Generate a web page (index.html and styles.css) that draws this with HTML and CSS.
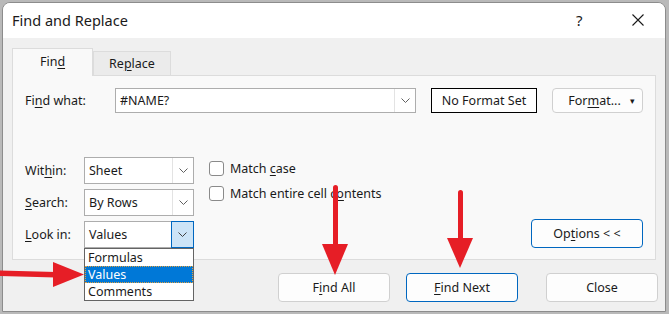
FILE: index.html
```html
<!DOCTYPE html>
<html>
  <head>
    <meta charset="utf-8" />
    <title>Find and Replace</title>
    <meta name="viewport" content="width=device-width, initial-scale=1" />
    <link rel="stylesheet" href="styles.css">
  </head>
  <body>
    <div class="window">
      <div class="titlebar">
        <span class="title">Find and Replace</span>
        <span class="help">?</span>
        <span class="close-x">
          <svg width="12" height="12" viewBox="0 0 12 12"><path d="M0.5 0.5 L11.5 11.5 M11.5 0.5 L0.5 11.5" stroke="#1a1a1a" stroke-width="1.1" fill="none"/></svg>
        </span>
      </div>
      <div class="content">
        <div class="tabs">
          <div class="tab active"><span>Fin<u>d</u></span></div>
          <div class="tab"><span>Re<u>p</u>lace</span></div>
        </div>
        <div class="panel">
          <div class="find-row">
            <span class="lbl lbl-find">Fi<u>n</u>d what:</span>
            <div class="combo combo-find">
              <span class="combo-text">#NAME?</span>
              <span class="combo-arrow">
                <svg width="9" height="5" viewBox="0 0 9 5"><path d="M0.5 0.5 L4.5 4.5 L8.5 0.5" stroke="#606060" fill="none"/></svg>
              </span>
            </div>
            <div class="format-preview">No Format Set</div>
            <div class="btn btn-format"><span>For<u>m</u>at...</span><span class="caret">&#9662;</span></div>
          </div>
          <div class="options-area">
            <div class="fields">
              <div class="field">
                <span class="lbl lbl-small">Wit<u>h</u>in:</span>
                <div class="combo">
                  <span class="combo-text">Sheet</span>
                  <span class="combo-arrow">
                    <svg width="9" height="5" viewBox="0 0 9 5"><path d="M0.5 0.5 L4.5 4.5 L8.5 0.5" stroke="#606060" fill="none"/></svg>
                  </span>
                </div>
              </div>
              <div class="field">
                <span class="lbl lbl-small"><u>S</u>earch:</span>
                <div class="combo">
                  <span class="combo-text">By Rows</span>
                  <span class="combo-arrow">
                    <svg width="9" height="5" viewBox="0 0 9 5"><path d="M0.5 0.5 L4.5 4.5 L8.5 0.5" stroke="#606060" fill="none"/></svg>
                  </span>
                </div>
              </div>
              <div class="field">
                <span class="lbl lbl-small"><u>L</u>ook in:</span>
                <div class="combo open">
                  <span class="combo-text">Values</span>
                  <span class="combo-arrow">
                    <svg width="9" height="5" viewBox="0 0 9 5"><path d="M0.5 0.5 L4.5 4.5 L8.5 0.5" stroke="#404040" fill="none"/></svg>
                  </span>
                  <div class="droplist">
                    <div class="drop-item">Formulas</div>
                    <div class="drop-item selected">Values</div>
                    <div class="drop-item">Comments</div>
                  </div>
                </div>
              </div>
            </div>
            <div class="checks">
              <div class="check"><span class="box"></span><span>Match <u>c</u>ase</span></div>
              <div class="check"><span class="box"></span><span>Match entire cell c<u>o</u>ntents</span></div>
            </div>
            <div class="btn btn-focus btn-options"><span>Op<u>t</u>ions &lt; &lt;</span></div>
          </div>
        </div>
        <div class="actions">
          <div class="btn btn-action"><span>F<u>i</u>nd All</span></div>
          <div class="btn btn-action btn-focus btn-next"><span><u>F</u>ind Next</span></div>
          <div class="btn btn-action btn-close">Close</div>
        </div>
      </div>
    </div>

    <!-- red annotation arrows -->
    <svg class="arrows" width="669" height="314" viewBox="0 0 669 314">
      <polygon points="0,270.5 56,272 56,277.5 0,276" fill="#e61e26"/>
      <polygon points="53,262 84,274.5 53,287" fill="#e61e26"/>
      <rect x="333" y="185" width="5" height="62" rx="2.5" fill="#e61e26"/>
      <polygon points="322,244 348,244 335,275" fill="#e61e26"/>
      <rect x="458" y="190" width="5" height="52" rx="2.5" fill="#e61e26"/>
      <polygon points="447,238 473,238 460,268" fill="#e61e26"/>
    </svg>
  </body>
</html>
```

FILE: styles.css
```css
body {
  margin: 0;
  padding: 2px 3px 2px 2px;
  background-color: #b9b9b9;
  font-family: "Noto Sans", "Open Sans", sans-serif;
  font-size: 12.5px;
  color: #1a1a1a;
  position: relative;
  width: 669px;
  height: 314px;
  box-sizing: border-box;
  overflow: hidden;
}
u {
  text-decoration-thickness: 1px;
  text-underline-offset: 2px;
}
.window {
  width: 664px;
  height: 310px;
  box-sizing: border-box;
  border: 1px solid #8c8c8c;
  border-radius: 8px 8px 0 0;
  background: #f0f0f0;
  display: flex;
  flex-direction: column;
  overflow: hidden;
}
.titlebar {
  height: 35px;
  background: #ffffff;
  display: flex;
  align-items: center;
  padding-left: 9px;
  flex-shrink: 0;
}
.title {
  font-size: 14.5px;
  flex: 1;
  padding-bottom: 2px;
}
.help {
  font-size: 15px;
  width: 12px;
  margin-right: 44px;
  padding-bottom: 2px;
}
.close-x {
  display: flex;
  margin-right: 21px;
  margin-bottom: 2px;
}
.content {
  flex: 1;
  padding: 10px 8px 0 9px;
  display: flex;
  flex-direction: column;
}
.tabs {
  display: flex;
  align-items: flex-end;
  height: 27px;
}
.tab {
  box-sizing: border-box;
  height: 24px;
  width: 78px;
  border: 1px solid #dcdcdc;
  border-bottom: none;
  background: #ebebeb;
  display: flex;
  justify-content: center;
  align-items: center;
  padding-bottom: 1px;
}
.tab.active {
  height: 28px;
  width: 81px;
  background: #f9f9f9;
  margin-bottom: -1px;
  position: relative;
  z-index: 1;
  padding-bottom: 3px;
}
.panel {
  height: 185px;
  box-sizing: border-box;
  border: 1px solid #dcdcdc;
  background: #f9f9f9;
  padding: 12px 12px 11px 12px;
  width: 644px;
  display: flex;
  flex-direction: column;
}
.find-row {
  display: flex;
  align-items: center;
  height: 25px;
}
.lbl-find {
  width: 90px;
}
.lbl-small {
  width: 59px;
}
.combo {
  box-sizing: border-box;
  height: 27px;
  width: 110px;
  border: 1px solid #adadad;
  background: #ffffff;
  display: flex;
  align-items: stretch;
  position: relative;
}
.combo-find {
  width: 301px;
  height: 25px;
}
.combo-text {
  flex: 1;
  display: flex;
  align-items: center;
  padding-left: 4px;
}
.combo-arrow {
  width: 20px;
  border-left: 1px solid #e3e3e3;
  display: flex;
  justify-content: center;
  align-items: center;
}
.combo.open .combo-arrow {
  margin: -1px -1px -1px 0;
  width: 21px;
  border: 1px solid #0067c0;
  background: #cce4f7;
}
.format-preview {
  box-sizing: border-box;
  width: 106px;
  height: 25px;
  margin-left: 15px;
  border: 1px solid #000000;
  display: flex;
  align-items: center;
  justify-content: center;
  background: #ffffff;
}
.btn {
  box-sizing: border-box;
  border: 1px solid #d0d0d0;
  border-radius: 4px;
  background: #fdfdfd;
  display: flex;
  align-items: center;
  justify-content: center;
}
.btn-focus {
  border-color: #0067c0;
}
.btn-format {
  width: 91px;
  height: 25px;
  margin-left: 15px;
  padding-left: 8px;
}
.caret {
  font-size: 9px;
  margin-left: 9px;
}
.options-area {
  margin-top: 44px;
  display: flex;
}
.fields {
  display: flex;
  flex-direction: column;
  gap: 5px;
}
.field {
  display: flex;
  align-items: center;
}
.checks {
  margin-left: 15px;
  padding-top: 1px;
  display: flex;
  flex-direction: column;
  gap: 5px;
}
.check {
  height: 20px;
  display: flex;
  align-items: center;
}
.box {
  box-sizing: border-box;
  width: 15px;
  height: 15px;
  border: 1px solid #8a8a8a;
  border-radius: 3px;
  background: #ffffff;
  margin-right: 6px;
}
.btn-options {
  margin-left: auto;
  align-self: flex-end;
  width: 112px;
  height: 29px;
}
.droplist {
  position: absolute;
  left: -1px;
  top: 26px;
  width: 110px;
  box-sizing: border-box;
  border: 1px solid #646464;
  background: #ffffff;
  z-index: 2;
}
.drop-item {
  height: 17px;
  line-height: 17px;
  padding-left: 3px;
  box-sizing: border-box;
}
.drop-item.selected {
  background: #0078d7;
  color: #ffffff;
  outline: 1px dotted #e0a040;
  outline-offset: -1px;
}
.actions {
  display: flex;
  justify-content: flex-end;
  margin-top: 13px;
  margin-right: -1px;
}
.btn-action {
  width: 112px;
  height: 29px;
}
.btn-next {
  margin-left: 16px;
}
.btn-close {
  margin-left: 28px;
}
.arrows {
  position: absolute;
  left: 0;
  top: 0;
  pointer-events: none;
}
```
